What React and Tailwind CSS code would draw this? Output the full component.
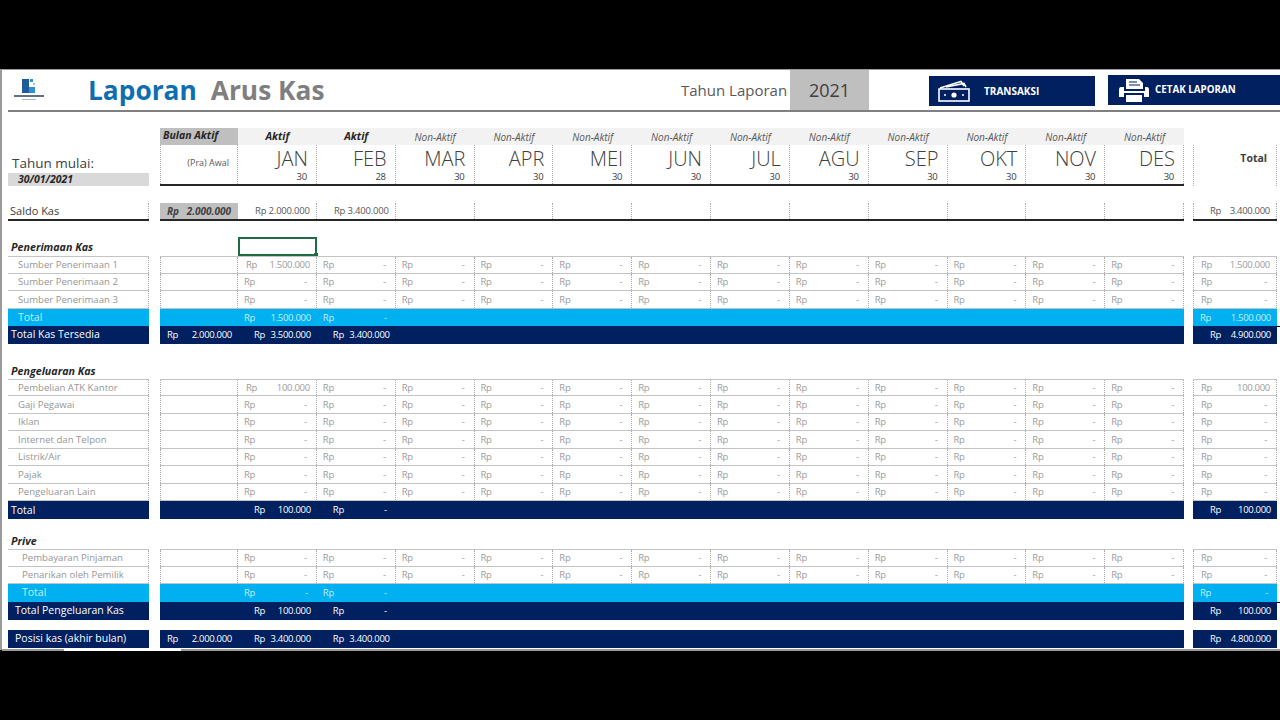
const months = [
  ["JAN", 30, "Aktif"], ["FEB", 28, "Aktif"], ["MAR", 30], ["APR", 30], ["MEI", 30], ["JUN", 30],
  ["JUL", 30], ["AGU", 30], ["SEP", 30], ["OKT", 30], ["NOV", 30], ["DES", 30],
];
const cols = "grid grid-cols-[78px_repeat(12,1fr)] w-[1024px] ml-[11px]";
const black = "border-b-2 border-[#262626]";
const num = "tracking-[-0.3px]";

// garis bawah solid di luar, garis titik-titik di dalam
function Cell({ line, left, className = "", children }) {
  return (
    <div className={`h-full ${line}`}>
      <div className={`h-full border-r border-dotted border-[#a8a8a8] ${left ? "border-l" : ""} ${className}`}>{children}</div>
    </div>
  );
}

function Logo() {
  return (
    <svg width="30" height="24" viewBox="0 0 30 24" className="ml-[12px] mt-[-1px]">
      <rect x="8" y="1" width="7" height="14" fill="#1f5a9c" />
      <rect x="15" y="9" width="6" height="6" fill="#2f8fd0" />
      <rect x="16" y="1" width="3" height="3" fill="#2f8fd0" />
      <rect x="19" y="5" width="2" height="2" fill="#9cc4e2" />
      <rect x="0" y="17" width="30" height="2" fill="#5f7188" />
      <rect x="8" y="21" width="14" height="1" fill="#a9b4c4" />
    </svg>
  );
}

function CashIcon() {
  return (
    <svg width="34" height="22" viewBox="0 0 34 22" fill="none" stroke="#fff" strokeWidth="1.6">
      <path d="M3 8 L24 1.5 L27 6" />
      <path d="M9 7 L27 3.5 L29 7" />
      <rect x="2" y="9" width="30" height="12" />
      <circle cx="17" cy="15" r="2.6" fill="#fff" stroke="none" />
      <circle cx="8" cy="15" r="1" fill="#fff" stroke="none" />
      <circle cx="26" cy="15" r="1" fill="#fff" stroke="none" />
    </svg>
  );
}

function PrinterIcon() {
  return (
    <svg width="32" height="24" viewBox="0 0 32 24">
      <path d="M8 1 H21 L25 5 V11 H8 Z" fill="#fff" />
      <path d="M11 4 H19 M11 7 H22" stroke="#002060" strokeWidth="1.2" />
      <path d="M3 9 H6 V13 H27 V9 H29 Q31 9 31 12 V19 H26 V15 H6 V19 H1 V12 Q1 9 3 9 Z" fill="#fff" />
      <rect x="8" y="17" width="16" height="7" fill="#fff" />
    </svg>
  );
}

// satu baris: label kiri, 13 kolom tengah, kolom total
function Row({ h = "h-[17.5px]", left, mid, total, mt = "", after }) {
  return (
    <div className={`flex relative ${h} ${mt}`}>
      <div className="w-[141px] h-full">{left}</div>
      <div className={`${cols} h-full`}>{mid}</div>
      <div className="w-[84px] ml-[9px] h-full">{total}</div>
      {after}
    </div>
  );
}

function Money({ value, px = "pl-[7px] pr-[6px]", className = "" }) {
  return (
    <div className={`flex h-full items-center justify-between pt-[1px] ${px} ${num} ${className}`}>
      <span>Rp</span>
      <span className={value === "-" ? "pr-[3px]" : ""}>{value}</span>
    </div>
  );
}

function DetailRow({ label, jan = "-", total = "-", indent = "pl-[10px]", first }) {
  const line = `border-b border-[#c4c4c4] ${first ? "border-t" : ""}`;
  return (
    <Row
      left={<Cell line={line} className={`flex items-center pt-[1px] text-[9.6px] text-[#969696] ${indent}`}>{label}</Cell>}
      mid={
        <>
          <Cell line={line} left />
          {months.map((m, i) => (
            <Cell key={m[0]} line={line} className="text-[9.5px] text-[#9c9c9c]">
              <Money value={i === 0 ? jan : "-"} px={i === 0 && jan !== "-" ? "pl-[8px] pr-[6px]" : "pl-[6px] pr-[6px]"} />
            </Cell>
          ))}
        </>
      }
      total={
        <Cell line={line} left className="text-[9.5px] text-[#9c9c9c]">
          <Money value={total} />
        </Cell>
      }
    />
  );
}

function Band({ label, color = "navy", indent = "pl-[3px]", cells = [], total, h, mt, tick }) {
  const bg = color === "navy" ? "bg-[#002060] text-white" : "bg-[#00b0f0] text-[#c9eefc]";
  return (
    <Row
      h={h}
      mt={mt}
      left={<div className={`h-full flex items-center pt-[1px] text-[10.5px] ${bg} ${indent}`}>{label}</div>}
      mid={
        <div className={`col-span-13 grid grid-cols-[78px_repeat(12,1fr)] h-full text-[9.5px] ${bg}`}>
          {cells.map((c, i) => (
            <div key={i} className="h-full">
              {c && <Money value={c[0]} px={c[1]} />}
            </div>
          ))}
        </div>
      }
      total={
        <div className={`h-full text-[9.5px] ${bg}`}>
          <Money value={total[0]} px={total[1]} />
        </div>
      }
      after={tick && <div className="absolute left-[1269px] top-0 w-[3px] border-t border-black" />}
    />
  );
}

function Heading({ label, mt, selected, pt = "" }) {
  return (
    <Row
      h="h-[18px]"
      mt={mt}
      left={<div className={`h-full flex items-center pl-[3px] text-[10.7px] font-bold italic text-[#262626] ${pt}`}>{label}</div>}
      mid={
        selected ? (
          <>
            <div />
            <div className="relative h-[19px] -mt-[1px] border-2 border-[#1f6b45]">
              <div className="absolute -right-[3px] -bottom-[3px] w-[4px] h-[4px] bg-[#1f6b45]" />
            </div>
          </>
        ) : null
      }
    />
  );
}

export default function App() {
  return (
    <div className="h-[720px] w-[1280px] bg-black pt-[69px] overflow-hidden font-['Open_Sans',sans-serif]">
      <div className="h-[581px] bg-white border-l-2 border-t border-[#9a9a9a] relative">
        <div className="flex h-[40px] items-stretch">
          <div className="w-[86px] flex items-center">
            <Logo />
          </div>
          <div className="flex items-center text-[26.3px] font-bold w-[592px] pt-[2px]">
            <span className="text-[#0f6eb0]">Laporan</span>
            <span className="text-[#7f7f7f] ml-[14px]">Arus Kas</span>
          </div>
          <div className="flex items-center w-[110px] pl-[1px] text-[15px] text-[#595959]">Tahun Laporan</div>
          <div className="w-[79px] bg-[#bfbfbf] flex items-center justify-center text-[18px] text-[#404040]">2021</div>
          <div className="ml-[60px] mt-[6px] w-[166px] h-[30px] bg-[#002060] flex items-center text-white text-[10px] font-bold">
            <span className="ml-[8px] mr-[13px] flex"><CashIcon /></span>
            TRANSAKSI
          </div>
          <div className="ml-[13px] mt-[5px] w-[172px] h-[30px] bg-[#002060] flex items-center text-white text-[9.8px] font-bold">
            <span className="ml-[10px] mr-[5px] flex"><PrinterIcon /></span>
            CETAK LAPORAN
          </div>
        </div>
        <div className="ml-[6px] h-[2px] bg-[#808080]" />

        <div className="pl-[6px]">
          <Row
            h="h-[17px]"
            mt="mt-[16px]"
            mid={
              <>
                <div className="bg-[#bfbfbf] text-[10.5px] font-bold italic text-[#262626] pl-[3px] pb-[1px] flex items-center">Bulan Aktif</div>
                {months.map((m) => (
                  <div key={m[0]} className={`bg-[#f2f2f2] flex items-center justify-center pt-[1px] italic ${m[2] ? "text-[10.5px] font-bold text-[#262626]" : "text-[10px] text-[#595959]"}`}>
                    {m[2] || "Non-Aktif"}
                  </div>
                ))}
              </>
            }
          />
          <Row
            h="h-[41px]"
            left={
              <div className="h-full flex flex-col justify-end">
                <div className="pl-[4px] text-[13.5px] leading-[18px] mb-[1px] text-[#404040]">Tahun mulai:</div>
                <div className="h-[13px] bg-[#d9d9d9] pl-[10px] text-[10.5px] leading-[13px] font-bold italic text-[#262626]">30/01/2021</div>
              </div>
            }
            mid={
              <>
                <Cell line={black} left className="flex items-center justify-end pr-[8px] pb-[4px] text-[9px] text-[#595959]">(Pra) Awal</Cell>
                {months.map((m) => (
                  <Cell key={m[0]} line={black} className="pr-[8px] text-right text-[#404040]">
                    <div className="text-[20px] leading-[27px] font-light">{m[0]}</div>
                    <div className="text-[9.5px] leading-[10px] pr-[1px] tracking-[-0.3px]">{m[1]}</div>
                  </Cell>
                ))}
              </>
            }
            total={
              <div className="h-full pb-[13px] border-r border-l border-dotted border-[#a8a8a8] flex items-center justify-end pr-[9px] text-[10.5px] font-bold text-[#404040]">Total</div>
            }
          />
          <Row
            h="h-[18px]"
            mt="mt-[17px]"
            left={<Cell line={black} className="flex items-center pt-[1px] pl-[2px] text-[11px] text-[#404040]">Saldo Kas</Cell>}
            mid={
              <>
                <div className={`h-full ${black} bg-[#bfbfbf] flex items-center justify-between px-[7px] text-[10px] font-bold italic text-[#404040]`}>
                  <span>Rp</span>
                  <span>2.000.000</span>
                </div>
                {months.map((m, i) => (
                  <Cell key={m[0]} line={black} className="flex items-center justify-end pr-[6px] text-[9.5px] tracking-[-0.2px] text-[#595959]">
                    {i === 0 && "Rp 2.000.000"}
                    {i === 1 && "Rp 3.400.000"}
                  </Cell>
                ))}
              </>
            }
            total={
              <Cell line={black} left className="text-[9.5px] text-[#595959]">
                <Money value="3.400.000" px="pl-[16px] pr-[6px]" />
              </Cell>
            }
          />

          <Heading label="Penerimaan Kas" mt="mt-[17px]" selected />
          <DetailRow first label="Sumber Penerimaan 1" jan="1.500.000" total="1.500.000" />
          <DetailRow label="Sumber Penerimaan 2" />
          <DetailRow label="Sumber Penerimaan 3" />
          <Band
            color="cyan"
            label="Total"
            indent="pl-[10px]"
            cells={[null, ["1.500.000", "pl-[6px] pr-[6px]"], ["-", "pl-[6px] pr-[6px]"]]}
            total={["1.500.000", "pl-[7px] pr-[6px]"]}
          />
          <Band
            label="Total Kas Tersedia"
            cells={[["2.000.000", "pl-[7px] pr-[6px]"], ["3.500.000", "pl-[16px] pr-[6px]"], ["3.400.000", "pl-[16px] pr-[6px]"]]}
            total={["4.900.000", "pl-[17px] pr-[6px]"]}
            tick
          />

          <Heading label="Pengeluaran Kas" mt="mt-[17px]" pt="pt-[3px]" />
          <DetailRow first label="Pembelian ATK Kantor" jan="100.000" total="100.000" />
          <DetailRow label="Gaji Pegawai" />
          <DetailRow label="Iklan" />
          <DetailRow label="Internet dan Telpon" />
          <DetailRow label="Listrik/Air" />
          <DetailRow label="Pajak" />
          <DetailRow label="Pengeluaran Lain" />
          <Band
            label="Total"
            cells={[null, ["100.000", "pl-[16px] pr-[6px]"], ["-", "pl-[16px] pr-[6px]"]]}
            total={["100.000", "pl-[17px] pr-[6px]"]}
            h="h-[18px]"
          />

          <Heading label="Prive" mt="mt-[12px]" pt="pt-[2px]" />
          <DetailRow first label="Pembayaran Pinjaman" indent="pl-[14px]" />
          <DetailRow label="Penarikan oleh Pemilik" indent="pl-[14px]" />
          <Band
            color="cyan"
            label="Total"
            indent="pl-[14px]"
            cells={[null, ["-", "pl-[6px] pr-[6px]"], ["-", "pl-[6px] pr-[6px]"]]}
            total={["-", "pl-[7px] pr-[6px]"]}
          />
          <Band
            label="Total Pengeluaran Kas"
            indent="pl-[7px]"
            cells={[null, ["100.000", "pl-[16px] pr-[6px]"], ["-", "pl-[16px] pr-[6px]"]]}
            total={["100.000", "pl-[17px] pr-[6px]"]}
            h="h-[18px]"
            tick
          />
          <Band
            label="Posisi kas (akhir bulan)"
            indent="pl-[7px]"
            mt="mt-[10px]"
            cells={[["2.000.000", "pl-[7px] pr-[6px]"], ["3.400.000", "pl-[16px] pr-[6px]"], ["3.400.000", "pl-[16px] pr-[6px]"]]}
            total={["4.800.000", "pl-[17px] pr-[6px]"]}
            h="h-[18px]"
          />
        </div>

        <div className="flex h-[2px] mt-[1px]">
          <div className="w-[62px] bg-[#9a9a9a]" />
          <div className="w-[117px] bg-white" />
          <div className="flex-1 bg-[#9a9a9a]" />
        </div>
      </div>
    </div>
  );
}
